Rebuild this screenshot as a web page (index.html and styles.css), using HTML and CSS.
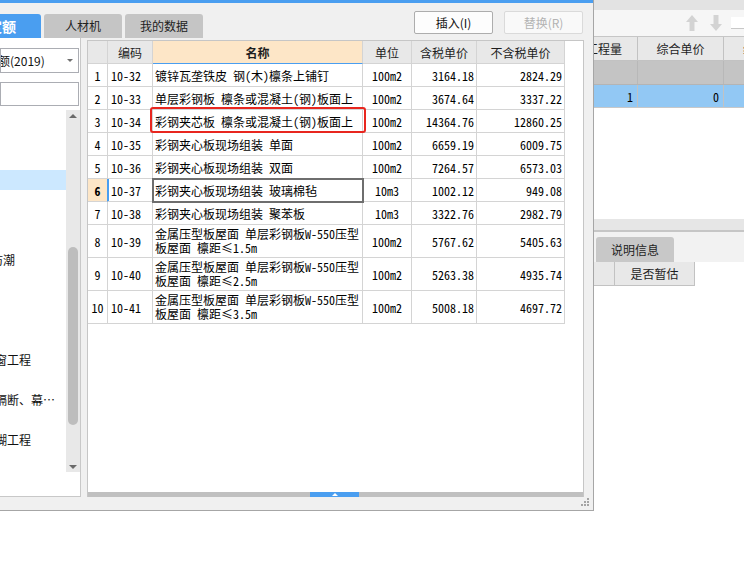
FILE: index.html
```html
<!DOCTYPE html>
<html lang="zh-CN">
<head>
<meta charset="utf-8">
<title>定额</title>
<link rel="stylesheet" href="styles.css">
</head>
<body>
<div class="page">
  <div class="dialog">
    <div class="topbar"></div>
    <div class="toolbar">
      <div class="tabs">
        <div class="tab active">定额</div>
        <div class="tab">人材机</div>
        <div class="tab">我的数据</div>
      </div>
      <div class="buttons">
        <div class="btn">插入(I)</div>
        <div class="btn disabled">替换(R)</div>
      </div>
    </div>
    <div class="main">
      <div class="left">
        <div class="select"><span class="select-text">定额(2019)</span><span class="caret"></span></div>
        <div class="search"></div>
        <div class="tree">
          <div class="tree-list">
            <div class="tree-row"></div>
            <div class="tree-row"></div>
            <div class="tree-row"></div>
            <div class="tree-row sel"></div>
            <div class="tree-row"></div>
            <div class="tree-row"></div>
            <div class="tree-row"></div>
            <div class="tree-row"><span class="t9">防潮</span></div>
            <div class="tree-row"></div>
            <div class="tree-row"></div>
            <div class="tree-row"></div>
            <div class="tree-row"></div>
            <div class="tree-row"><span class="t17">门窗工程</span></div>
            <div class="tree-row"></div>
            <div class="tree-row"><span class="t17">与隔断、幕…</span></div>
            <div class="tree-row"></div>
            <div class="tree-row"><span class="t17">裱糊工程</span></div>
          </div>
          <div class="vscroll">
            <span class="vs-up"></span>
            <span class="vs-thumb"></span>
            <span class="vs-down"></span>
          </div>
        </div>
      </div>
      <div class="grid">
        <div class="row head">
          <div class="cell"></div>
          <div class="cell">编码</div>
          <div class="cell name-h">名称</div>
          <div class="cell">单位</div>
          <div class="cell">含税单价</div>
          <div class="cell">不含税单价</div>
        </div>
        <div class="row">
          <div class="cell num">1</div><div class="cell code">10-32</div>
          <div class="cell name">镀锌瓦垄铁皮 钢(木)檩条上铺钉</div>
          <div class="cell unit">100m2</div><div class="cell price">3164.18</div><div class="cell price">2824.29</div>
        </div>
        <div class="row">
          <div class="cell num">2</div><div class="cell code">10-33</div>
          <div class="cell name">单层彩钢板 檩条或混凝土(钢)板面上</div>
          <div class="cell unit">100m2</div><div class="cell price">3674.64</div><div class="cell price">3337.22</div>
        </div>
        <div class="row">
          <div class="cell num">3</div><div class="cell code">10-34</div>
          <div class="cell name marked">彩钢夹芯板 檩条或混凝土(钢)板面上<span class="mark"></span></div>
          <div class="cell unit">100m2</div><div class="cell price">14364.76</div><div class="cell price">12860.25</div>
        </div>
        <div class="row">
          <div class="cell num">4</div><div class="cell code">10-35</div>
          <div class="cell name">彩钢夹心板现场组装 单面</div>
          <div class="cell unit">100m2</div><div class="cell price">6659.19</div><div class="cell price">6009.75</div>
        </div>
        <div class="row">
          <div class="cell num">5</div><div class="cell code">10-36</div>
          <div class="cell name">彩钢夹心板现场组装 双面</div>
          <div class="cell unit">100m2</div><div class="cell price">7264.57</div><div class="cell price">6573.03</div>
        </div>
        <div class="row current">
          <div class="cell num">6</div><div class="cell code">10-37</div>
          <div class="cell name selected">彩钢夹心板现场组装 玻璃棉毡</div>
          <div class="cell unit">10m3</div><div class="cell price">1002.12</div><div class="cell price">949.08</div>
        </div>
        <div class="row">
          <div class="cell num">7</div><div class="cell code">10-38</div>
          <div class="cell name">彩钢夹心板现场组装 聚苯板</div>
          <div class="cell unit">10m3</div><div class="cell price">3322.76</div><div class="cell price">2982.79</div>
        </div>
        <div class="row tall">
          <div class="cell num">8</div><div class="cell code">10-39</div>
          <div class="cell name"><span class="lines">金属压型板屋面 单层彩钢板W-550压型<br>板屋面 檩距≤1.5m</span></div>
          <div class="cell unit">100m2</div><div class="cell price">5767.62</div><div class="cell price">5405.63</div>
        </div>
        <div class="row tall">
          <div class="cell num">9</div><div class="cell code">10-40</div>
          <div class="cell name"><span class="lines">金属压型板屋面 单层彩钢板W-550压型<br>板屋面 檩距≤2.5m</span></div>
          <div class="cell unit">100m2</div><div class="cell price">5263.38</div><div class="cell price">4935.74</div>
        </div>
        <div class="row tall">
          <div class="cell num">10</div><div class="cell code">10-41</div>
          <div class="cell name"><span class="lines">金属压型板屋面 单层彩钢板W-550压型<br>板屋面 檩距≤3.5m</span></div>
          <div class="cell unit">100m2</div><div class="cell price">5008.18</div><div class="cell price">4697.72</div>
        </div>
        <div class="grid-fill"></div>
        <div class="hscroll"><div class="hs-thumb"><span class="hs-arrow"></span></div></div>
      </div>
    </div>
    <div class="footer">
      <svg class="grip" width="9" height="9" viewBox="0 0 9 9">
        <rect x="6" y="0" width="2" height="2" fill="#a4a4a4"/>
        <rect x="3" y="3" width="2" height="2" fill="#a4a4a4"/>
        <rect x="6" y="3" width="2" height="2" fill="#a4a4a4"/>
        <rect x="0" y="6" width="2" height="2" fill="#a4a4a4"/>
        <rect x="3" y="6" width="2" height="2" fill="#a4a4a4"/>
        <rect x="6" y="6" width="2" height="2" fill="#a4a4a4"/>
      </svg>
    </div>
  </div>

  <div class="app">
    <div class="app-top"></div>
    <div class="app-tools">
      <svg class="arr up" width="12" height="16" viewBox="0 0 12 16"><polygon points="6,0 12,7 8.5,7 8.5,16 3.5,16 3.5,7 0,7" fill="#d3d3d3"/></svg>
      <svg class="arr down" width="12" height="16" viewBox="0 0 12 16"><polygon points="6,16 12,9 8.5,9 8.5,0 3.5,0 3.5,9 0,9" fill="#d3d3d3"/></svg>
      <svg class="arr left" width="16" height="12" viewBox="0 0 16 12"><polygon points="0,6 7,0 7,3.5 16,3.5 16,8.5 7,8.5 7,12" fill="#d3d3d3"/></svg>
    </div>
    <div class="app-row app-head">
      <div class="ac c1"><span class="cut">工程量</span></div>
      <div class="ac c2">综合单价</div>
      <div class="ac c3">综合合价</div>
    </div>
    <div class="app-row app-gray">
      <div class="ac c1"></div><div class="ac c2"></div><div class="ac c3"></div>
    </div>
    <div class="app-row app-blue">
      <div class="ac c1 val">1</div><div class="ac c2 val">0</div><div class="ac c3"></div>
    </div>
    <div class="app-space"></div>
    <div class="lower-top"></div>
    <div class="lower-tabs"><div class="ltab">说明信息</div></div>
    <div class="lower-head">
      <div class="lh c-a"></div>
      <div class="lh c-b">是否暂估</div>
    </div>
  </div>
</div>
</body>
</html>
```

FILE: styles.css
```css
html, body {
  margin: 0;
  padding: 0;
  background: #ffffff;
}

body {
  font-family: "Noto Sans CJK SC", "Noto Sans", sans-serif;
  font-size: 12px;
  color: #000;
}

.page {
  display: flex;
  width: 744px;
  height: 562px;
  overflow: hidden;
}

/* ---------- dialog ---------- */
.dialog {
  flex: none;
  width: 594px;
  height: 511px;
  box-sizing: border-box;
  background: #f0f0f0;
  border-right: 1px solid #a6a6a6;
  border-bottom: 1px solid #a6a6a6;
  display: flex;
  flex-direction: column;
  overflow: hidden;
}

.topbar {
  flex: none;
  height: 3px;
  background: #4a9ef0;
}

.toolbar {
  flex: none;
  height: 35px;
  display: flex;
  justify-content: space-between;
  align-items: flex-start;
}

.tabs {
  display: flex;
  gap: 3px;
  margin-top: 11px;
  margin-left: -37px;
}

.tab {
  width: 78px;
  height: 24px;
  line-height: 24px;
  text-align: center;
  background: #c5c5c5;
  color: #222;
  border-radius: 3px 3px 0 0;
  font-size: 12px;
}

.tab.active {
  background: #4a9ef0;
  color: #fff;
  font-weight: bold;
  font-size: 14px;
}

.buttons {
  display: flex;
  gap: 11px;
  margin-top: 8px;
  margin-right: 10px;
}

.btn {
  width: 79px;
  height: 23px;
  box-sizing: border-box;
  border: 1px solid #adadad;
  border-radius: 2px;
  background: #fdfdfd;
  text-align: center;
  line-height: 21px;
  color: #111;
  font-size: 12px;
}

.btn.disabled {
  border-color: #dadada;
  color: #b3b3b3;
  background: #f9f9f9;
}

.main {
  flex: 1;
  display: flex;
  min-height: 0;
}

/* ---------- left panel ---------- */
.left {
  flex: none;
  width: 81px;
  box-sizing: border-box;
  background: #fff;
  border-right: 1px solid #c8c8c8;
  border-bottom: 1px solid #c8c8c8;
  display: flex;
  flex-direction: column;
  overflow: hidden;
}

.select {
  flex: none;
  margin: 10px 1px 0 0;
  height: 25px;
  box-sizing: border-box;
  border: 1px solid #abadb3;
  display: flex;
  align-items: center;
  justify-content: space-between;
  padding-right: 5px;
  white-space: nowrap;
  overflow: hidden;
}

.select-text {
  margin-left: -15px;
  color: #111;
}

.caret {
  width: 0;
  height: 0;
  border-left: 3px solid transparent;
  border-right: 3px solid transparent;
  border-top: 3px solid #707070;
}

.search {
  flex: none;
  margin: 9px 1px 0 0;
  height: 24px;
  box-sizing: border-box;
  border: 1px solid #abadb3;
  background: #fff;
}

.tree {
  flex: none;
  margin-top: 4px;
  height: 362px;
  display: flex;
}

.tree-list {
  width: 66px;
  overflow: hidden;
}

.tree-row {
  height: 20px;
  line-height: 20px;
  white-space: nowrap;
  color: #111;
}

.tree-row.sel {
  background: #cce8ff;
}

.t9 { margin-left: -9px; }
.t17 { margin-left: -17px; }

.vscroll {
  width: 14px;
  background: #e8e8e8;
  display: flex;
  flex-direction: column;
  align-items: center;
}

.vs-up {
  margin-top: 4px;
  width: 0;
  height: 0;
  border-left: 4px solid transparent;
  border-right: 4px solid transparent;
  border-bottom: 4px solid #6a6a6a;
}

.vs-thumb {
  margin-top: 129px;
  width: 10px;
  height: 178px;
  border-radius: 5px;
  background: #bdbdbd;
}

.vs-down {
  margin-top: auto;
  margin-bottom: 3px;
  width: 0;
  height: 0;
  border-left: 4px solid transparent;
  border-right: 4px solid transparent;
  border-top: 4px solid #6a6a6a;
}

/* ---------- grid ---------- */
.grid {
  flex: none;
  width: 497px;
  margin: 2px 0 0 6px;
  box-sizing: border-box;
  background: #fff;
  border: 1px solid #c6c6c6;
  border-bottom: none;
  display: flex;
  flex-direction: column;
}

.row {
  flex: none;
  display: grid;
  grid-template-columns: 20px 45px 210px 49px 65px 88px;
  width: 477px;
  height: 23px;
  font-family: "Noto Sans Mono CJK SC", "Noto Sans CJK SC", "DejaVu Sans Mono", monospace;
  font-size: 12px;
}

.row.tall {
  height: 33px;
}

.cell {
  box-sizing: border-box;
  border-right: 1px solid #d4d4d4;
  border-bottom: 1px solid #d4d4d4;
  display: flex;
  align-items: center;
  white-space: nowrap;
  background: #fff;
  color: #000;
}

.row.head .cell {
  background: #e8e8e8;
  justify-content: center;
  font-family: "Noto Sans CJK SC", sans-serif;
  color: #1e1e1e;
}

.row.head .name-h {
  background: #fde6c7;
  font-weight: bold;
  border-bottom-color: #4a9ef0;
}

.num {
  justify-content: center;
}

.code {
  padding-left: 3px;
}

.name {
  padding-left: 2px;
}

.lines {
  display: block;
  line-height: 14px;
}

.unit {
  justify-content: center;
}

.price {
  justify-content: flex-end;
  padding-right: 2px;
}

.marked {
  position: relative;
}

.mark {
  position: absolute;
  left: -3px;
  top: -3px;
  right: -4px;
  bottom: -1px;
  border: 2px solid #e8261f;
  border-radius: 3px;
}

.row.current .num {
  background: #fde6c7;
  font-weight: bold;
  border-right-color: #4a9ef0;
}

.row.current .code {
  box-shadow: inset 1px 0 0 #4a9ef0;
}

.selected {
  position: relative;
  z-index: 1;
  outline: 2px solid #6e6e6e;
  outline-offset: -1px;
}

.grid-fill {
  flex: 1;
}

.hscroll {
  flex: none;
  height: 5px;
  background: #c0c0c0;
  display: flex;
}

.hs-thumb {
  margin-left: 222px;
  width: 49px;
  height: 5px;
  background: #4a9ef0;
  display: flex;
  justify-content: center;
  align-items: center;
}

.hs-arrow {
  width: 0;
  height: 0;
  border-left: 3px solid transparent;
  border-right: 3px solid transparent;
  border-bottom: 3px solid #fff;
}

.footer {
  flex: none;
  height: 13px;
  display: flex;
  justify-content: flex-end;
  align-items: flex-start;
  padding-right: 3px;
}

.grip {
  margin-top: 1px;
}

/* ---------- background app ---------- */
.app {
  flex: 1;
  min-width: 0;
  display: flex;
  flex-direction: column;
  overflow: hidden;
  background: #fff;
}

.app-top {
  flex: none;
  height: 10px;
  background: #e3e3e3;
}

.app-tools {
  flex: none;
  height: 26px;
  background: #f6f6f6;
  display: flex;
  align-items: center;
  padding-left: 92px;
  overflow: hidden;
}

.arr {
  flex: none;
  display: block;
}

.arr.down { margin-left: 12px; }
.arr.left { margin-left: 9px; }

.app-row {
  flex: none;
  display: flex;
  box-sizing: border-box;
}

.ac {
  flex: none;
  box-sizing: border-box;
  border-right: 1px solid #c2c2c2;
  display: flex;
  align-items: center;
  justify-content: center;
  white-space: nowrap;
  overflow: hidden;
}

.c1 { width: 44px; justify-content: flex-start; }
.c2 { width: 86px; }
.c3 { width: 86px; justify-content: flex-start; padding-left: 19px; }

.cut { margin-left: -8px; }

.app-head {
  height: 25px;
  background: #e8e8e8;
  border-top: 1px solid #c6c6c6;
  border-bottom: 1px solid #c2c2c2;
  color: #1e1e1e;
}

.app-gray {
  height: 24px;
  background: #c4c4c4;
  border-bottom: 1px solid #b4b4b4;
}

.app-gray .ac { border-right-color: #b8b8b8; }

.app-blue {
  height: 23px;
  background: #92c8f4;
  border-bottom: 1px solid #c8c8c8;
  font-family: "Noto Sans Mono CJK SC", "DejaVu Sans Mono", monospace;
}

.ac.val {
  justify-content: flex-end;
  padding-right: 4px;
}

.app-space {
  flex: none;
  height: 111px;
}

.lower-top {
  flex: none;
  height: 11px;
  background: #e6e6e6;
  border-bottom: 2px solid #c6c6c6;
}

.lower-tabs {
  flex: none;
  height: 30px;
  box-sizing: border-box;
  background: #f2f2f2;
  padding: 5px 0 0 2px;
  display: flex;
}

.ltab {
  width: 78px;
  height: 25px;
  line-height: 25px;
  text-align: center;
  background: #c8c8c8;
  border-radius: 3px 3px 0 0;
  color: #1e1e1e;
}

.lower-head {
  flex: none;
  display: flex;
  height: 24px;
}

.lh {
  box-sizing: border-box;
  background: #e8e8e8;
  border-right: 1px solid #c2c2c2;
  border-bottom: 1px solid #c2c2c2;
  display: flex;
  align-items: center;
  justify-content: center;
  color: #1e1e1e;
}

.c-a { width: 21px; }
.c-b { width: 80px; }
```
